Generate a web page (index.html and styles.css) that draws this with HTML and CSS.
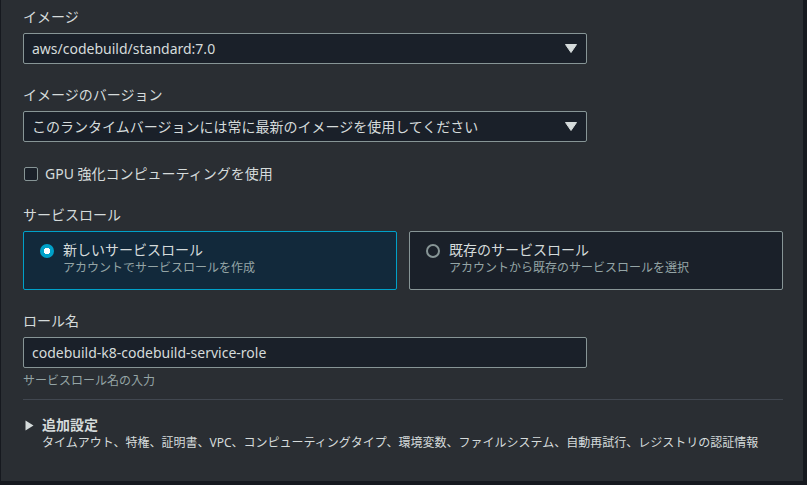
FILE: index.html
```html
<!DOCTYPE html>
<html lang="ja">
<head>
  <meta charset="UTF-8">
  <meta name="viewport" content="width=device-width, initial-scale=1.0">
  <title>環境</title>
  <link rel="stylesheet" href="styles.css">
</head>
<body>
  <div class="panel">
    <div class="field first">
      <div class="label">イメージ</div>
      <div class="select">
        <span>aws/codebuild/standard:7.0</span>
        <svg class="caret" width="12" height="9" viewBox="0 0 12 9"><polygon points="0.5,0.5 11.5,0.5 6,8.5" fill="#d5dbdb" stroke="#d5dbdb" stroke-linejoin="round"/></svg>
      </div>
    </div>

    <div class="field">
      <div class="label">イメージのバージョン</div>
      <div class="select">
        <span>このランタイムバージョンには常に最新のイメージを使用してください</span>
        <svg class="caret" width="12" height="9" viewBox="0 0 12 9"><polygon points="0.5,0.5 11.5,0.5 6,8.5" fill="#d5dbdb" stroke="#d5dbdb" stroke-linejoin="round"/></svg>
      </div>
    </div>

    <label class="check-row">
      <span class="checkbox"></span>
      <span>GPU 強化コンピューティングを使用</span>
    </label>

    <div class="field">
      <div class="label">サービスロール</div>
      <div class="tiles">
        <div class="tile selected">
          <span class="radio on"></span>
          <div class="tile-text">
            <div class="tile-title">新しいサービスロール</div>
            <div class="tile-desc">アカウントでサービスロールを作成</div>
          </div>
        </div>
        <div class="tile">
          <span class="radio"></span>
          <div class="tile-text">
            <div class="tile-title">既存のサービスロール</div>
            <div class="tile-desc">アカウントから既存のサービスロールを選択</div>
          </div>
        </div>
      </div>
    </div>

    <div class="field">
      <div class="label">ロール名</div>
      <div class="select input">codebuild-k8-codebuild-service-role</div>
      <div class="hint">サービスロール名の入力</div>
    </div>

    <div class="divider"></div>

    <div class="expander">
      <div class="exp-title">
        <svg class="exp-arrow" width="9" height="11" viewBox="0 0 9 11"><polygon points="0.5,0.5 8.5,5.5 0.5,10.5" fill="#d5dbdb"/></svg>
        <span>追加設定</span>
      </div>
      <div class="exp-desc">タイムアウト、特権、証明書、VPC、コンピューティングタイプ、環境変数、ファイルシステム、自動再試行、レジストリの認証情報</div>
    </div>
  </div>
</body>
</html>
```

FILE: styles.css
```css
* {
  margin: 0;
  padding: 0;
  box-sizing: border-box;
}
body {
  background: #16191f;
  font-family: "Noto Sans", "Noto Sans CJK JP", sans-serif;
  color: #d5dbdb;
  font-size: 14px;
}
.panel {
  margin-left: 1px;
  width: 802px;
  height: 481px;
  background: #2a2e33;
  padding: 6px 20px 0 22px;
}
.field {
  margin-top: 20px;
}
.field.first {
  margin-top: 0;
}
.label {
  line-height: 22px;
  margin-bottom: 5px;
}
.select {
  width: 564px;
  height: 31px;
  background: #1a2029;
  border: 1px solid #879596;
  border-radius: 2px;
  display: flex;
  align-items: center;
  justify-content: space-between;
  padding: 0 9px 0 8px;
  line-height: 20px;
}
.caret {
  display: block;
}
.check-row {
  margin-top: 22px;
  height: 20px;
  display: flex;
  align-items: center;
  gap: 7px;
  line-height: 20px;
}
.checkbox {
  width: 14px;
  height: 14px;
  border: 1px solid #879596;
  border-radius: 2px;
  background: #1a2029;
  margin-left: 1px;
}
.tiles {
  display: flex;
  gap: 12px;
}
.tile {
  width: 374px;
  height: 59px;
  border: 1px solid #879596;
  border-radius: 2px;
  background: #1a2029;
  display: flex;
  align-items: flex-start;
  gap: 9px;
  padding: 9px 16px 0 16px;
}
.tile.selected {
  background: #12293b;
  border-color: #00a1c9;
}
.radio {
  width: 14px;
  height: 14px;
  margin-top: 3px;
  border-radius: 50%;
  border: 2px solid #879596;
  flex-shrink: 0;
}
.radio.on {
  border: none;
  background: radial-gradient(circle, #ffffff 0 3px, #00a1c9 3.5px);
}
.tile-title {
  line-height: 18px;
}
.tile-desc {
  font-size: 12px;
  line-height: 18px;
  color: #95a5a6;
}
.input {
  justify-content: flex-start;
}
.hint {
  margin-top: 4px;
  font-size: 12px;
  line-height: 18px;
  color: #95a5a6;
}
.divider {
  margin-top: 9px;
  width: 760px;
  height: 1px;
  background: #414750;
}
.expander {
  margin-top: 16px;
}
.exp-title {
  display: flex;
  align-items: center;
  gap: 8px;
  font-weight: bold;
  line-height: 18px;
  padding-left: 2px;
}
.exp-arrow {
  display: block;
}
.exp-desc {
  padding-left: 19px;
  font-size: 12px;
  line-height: 18px;
}
```
